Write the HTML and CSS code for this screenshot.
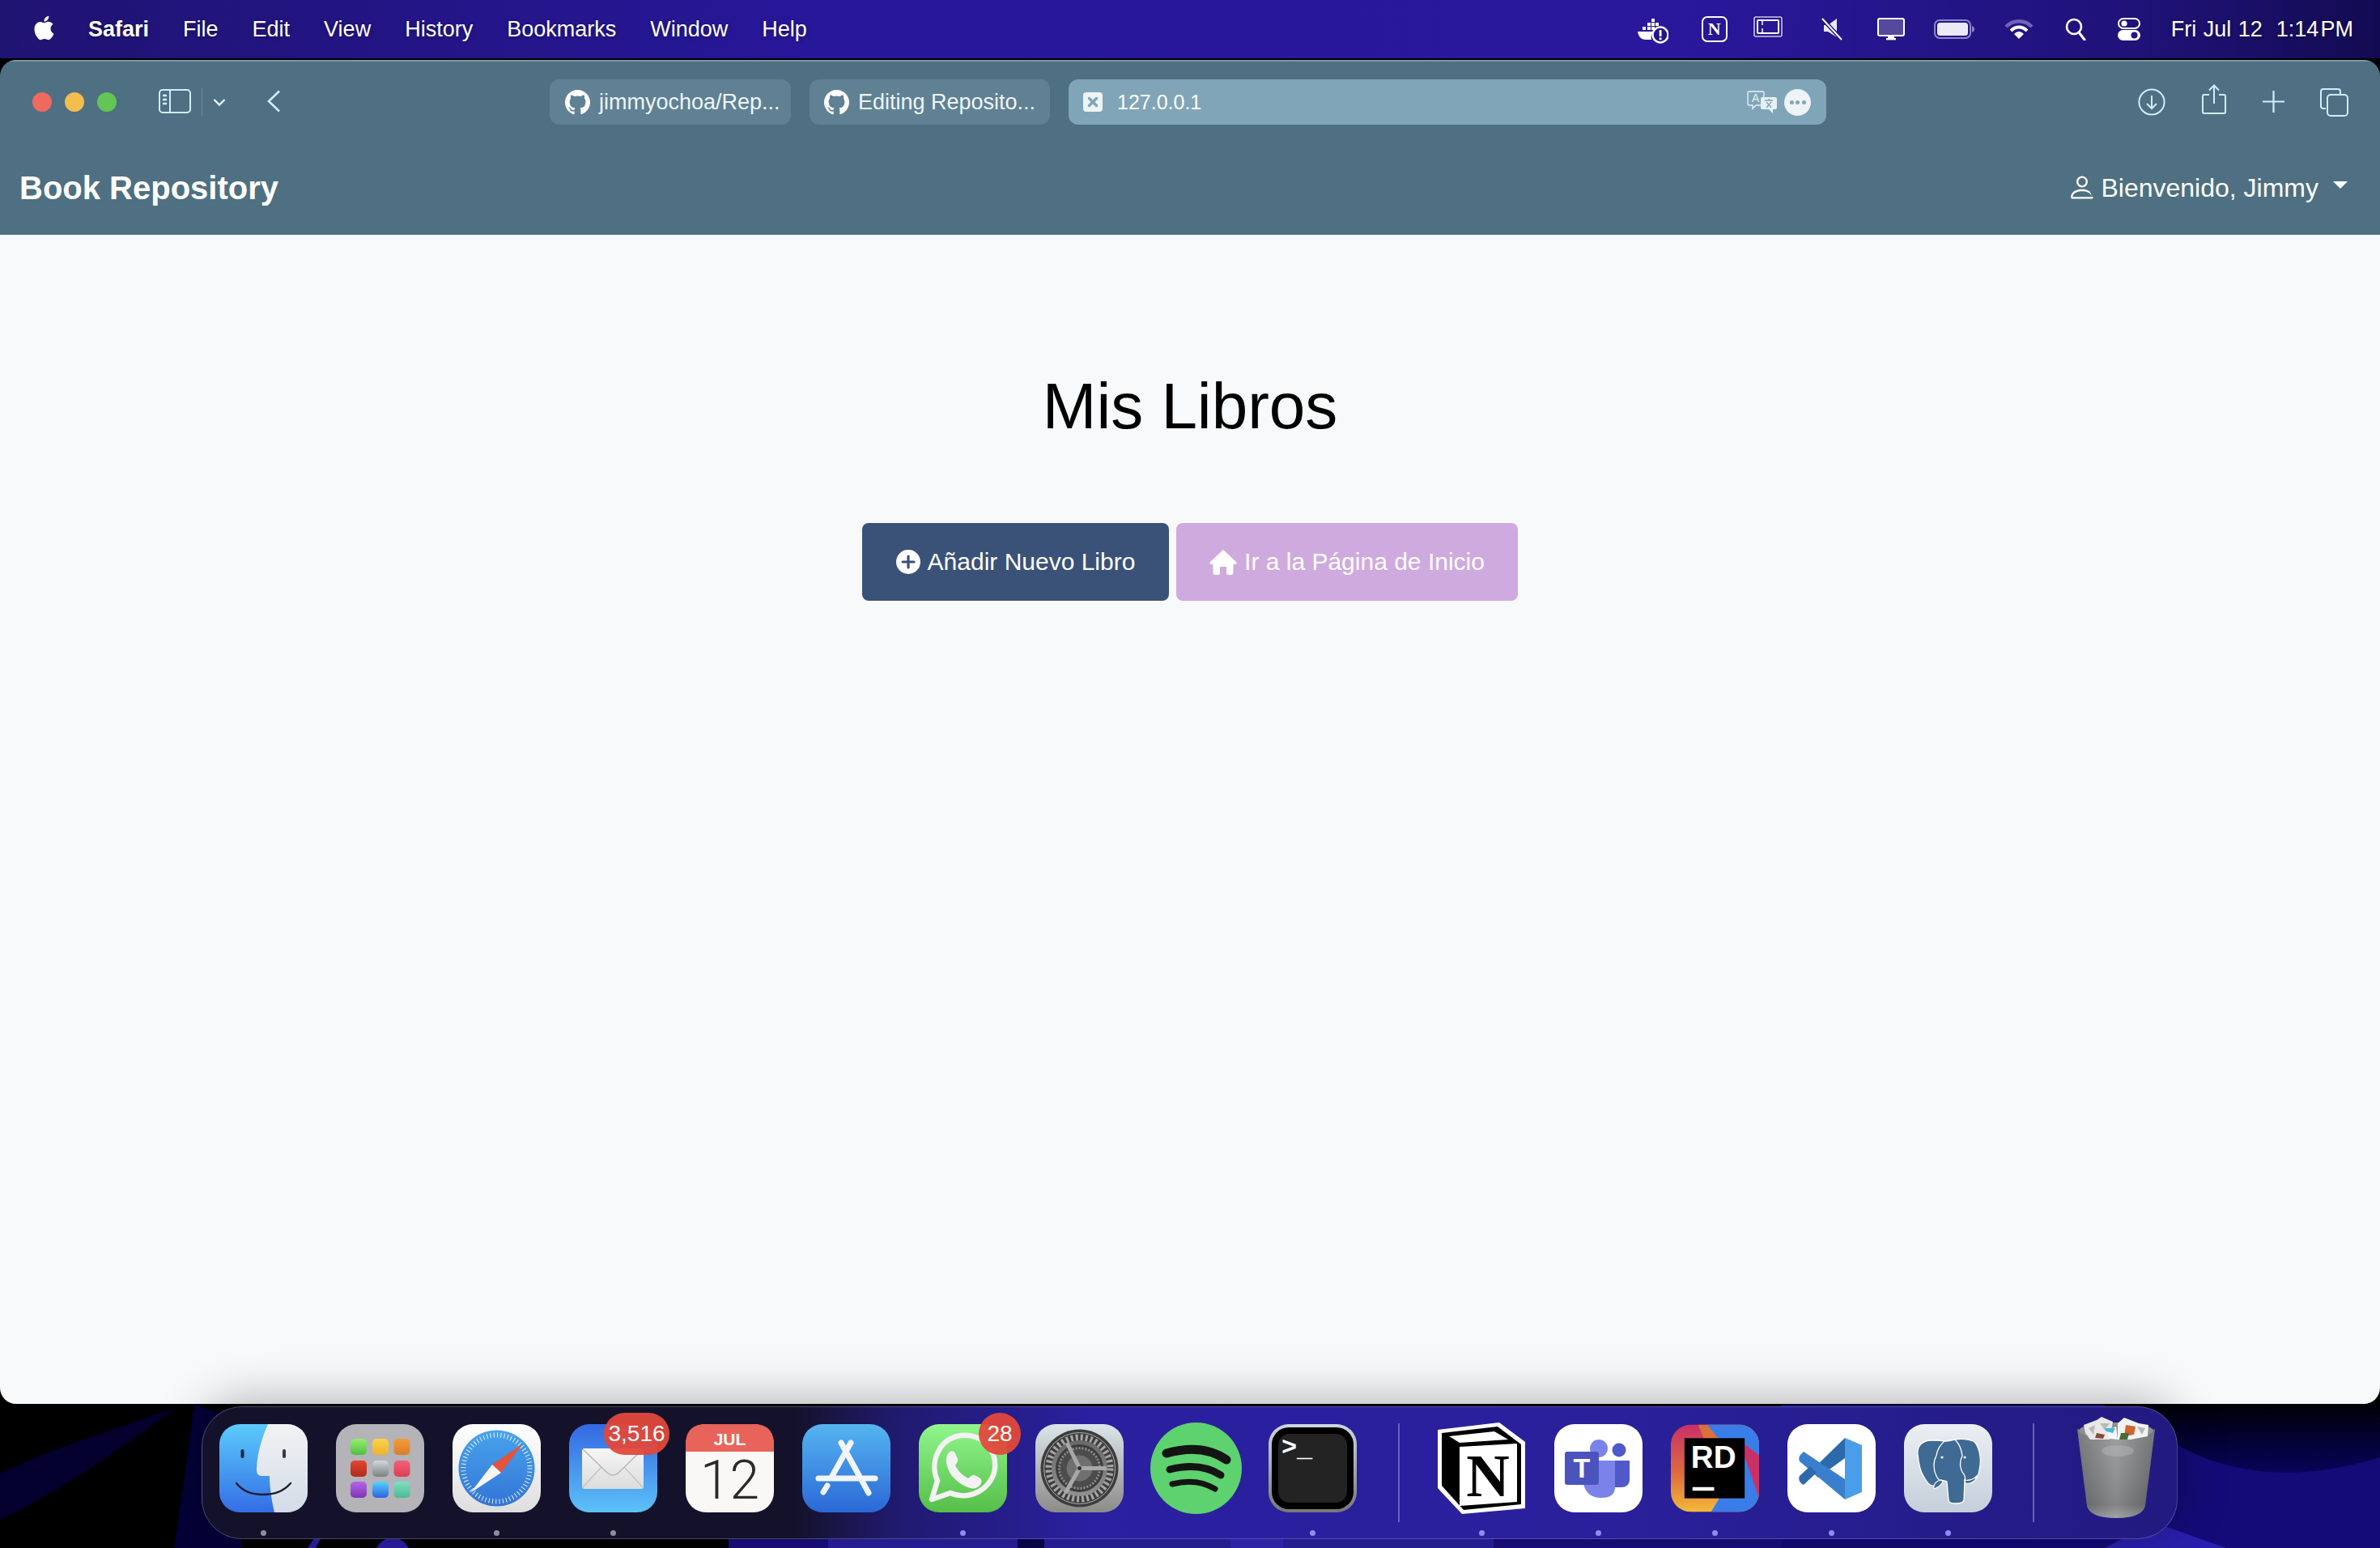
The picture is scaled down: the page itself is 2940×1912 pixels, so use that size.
FILE: index.html
```html
<!DOCTYPE html>
<html lang="es">
<head>
<meta charset="utf-8">
<title>Mis Libros</title>
<link rel="stylesheet" href="styles.css">
</head>
<body class="desktop">

<!-- wallpaper, free canvas behind everything -->
<svg class="wallpaper" viewBox="0 0 2940 1912" preserveAspectRatio="none">
	<defs>
		<linearGradient id="wall-wave" x1="0" y1="0" x2="0" y2="1">
			<stop offset="0" stop-color="#000008"/>
			<stop offset="1" stop-color="#08045a"/>
		</linearGradient>
	</defs>
	<rect width="2940" height="1912" fill="#000"/>
	<path d="M0 1820 C60 1790 130 1770 216 1739 C150 1790 60 1850 0 1877Z" fill="#03002e"/>
	<path d="M215 1912 C225 1850 235 1770 240 1735 L270 1745 L300 1912Z" fill="#040038"/>
	<path d="M380 1912 L395 1890 L402 1890 L390 1912Z M465 1912 C475 1895 495 1895 505 1912Z" fill="#2b1fa8"/>
	<rect x="900" y="1895" width="1300" height="17" fill="#1a0f80"/>
	<rect x="1023" y="1895" width="234" height="17" fill="#2a20a0"/>
	<rect x="1257" y="1895" width="33" height="17" fill="#0a0650"/>
	<rect x="1290" y="1895" width="230" height="17" fill="#2a20a0"/>
	<rect x="1520" y="1895" width="65" height="17" fill="#3528b8"/>
	<rect x="1585" y="1895" width="260" height="17" fill="#2a20a0"/>
	<rect x="2200" y="1735" width="740" height="177" fill="#140b78"/>
	<path d="M2600 1735 H2940 V1800 C2860 1825 2770 1830 2690 1785 L2600 1760Z" fill="url(#wall-wave)"/>
	<path d="M2660 1880 L2750 1912 H2600Z" fill="#2a1fae"/>
</svg>

<header class="menubar">
	<div class="menu-list">
		<svg class="apple" viewBox="3 1.5 18 21"><path d="M18.71 19.5c-.83 1.24-1.71 2.45-3.05 2.47-1.34.03-1.77-.79-3.29-.79-1.53 0-2 .77-3.27.82-1.31.05-2.3-1.32-3.14-2.53C4.25 17 2.94 12.45 4.7 9.39c.87-1.52 2.43-2.48 4.12-2.51 1.28-.02 2.5.87 3.29.87.78 0 2.26-1.07 3.81-.91.65.03 2.47.26 3.64 1.98-.09.06-2.17 1.28-2.15 3.81.03 3.02 2.65 4.03 2.68 4.04-.03.07-.42 1.44-1.38 2.83M13 3.5c.73-.83 1.94-1.46 2.94-1.5.13 1.17-.34 2.35-1.04 3.19-.69.85-1.83 1.51-2.95 1.42-.15-1.15.41-2.35 1.05-3.11z"/></svg>
		<span class="menu-app">Safari</span>
		<span>File</span>
		<span>Edit</span>
		<span>View</span>
		<span>History</span>
		<span>Bookmarks</span>
		<span>Window</span>
		<span>Help</span>
	</div>
	<div class="status-list">
		<svg class="st-docker" viewBox="0 0 38 32" fill="#fff">
			<rect x="17" y="1" width="4" height="4"/><rect x="12" y="6" width="4" height="4"/><rect x="17" y="6" width="4" height="4"/><rect x="22" y="6" width="4" height="4"/><rect x="6" y="11" width="4" height="4"/><rect x="12" y="11" width="4" height="4"/><rect x="17" y="11" width="4" height="4"/>
			<path d="M0 17 H20 C17 19 16 23 17 27 H10 C4 27 1 23 0 17Z"/>
			<circle cx="28" cy="21" r="9.5" fill="#221489" stroke="#fff" stroke-width="2.4"/>
			<rect x="26.7" y="15" width="2.8" height="8"/><rect x="26.7" y="24.5" width="2.8" height="2.8"/>
		</svg>
		<span class="st-notion">N</span>
		<svg class="st-tablet" viewBox="0 0 36 26" fill="none" stroke="#fff" stroke-opacity=".75">
			<rect x="1" y="1" width="34" height="24" rx="2" stroke-width="1.6"/>
			<rect x="5" y="5" width="26" height="16" rx="1" stroke-width="2" stroke-opacity="1"/>
			<path d="M11 5 V11 M11 15 V21" stroke-width="2"/>
		</svg>
		<svg class="st-mute" viewBox="0 0 26 28">
			<path d="M3 9 H8 L19 1 V24 L8 17 H3Z" fill="#fff" fill-opacity=".9"/>
			<path d="M1 1 L25 27" stroke="#221489" stroke-width="5"/>
			<path d="M1 1 L25 27" stroke="#fff" stroke-width="2"/>
		</svg>
		<svg class="st-display" viewBox="0 0 34 28">
			<rect x="1" y="1" width="32" height="21" rx="2" fill="#55499f" stroke="#fff" stroke-width="2"/>
			<rect x="13" y="22" width="8" height="3" fill="#fff"/><rect x="11" y="25" width="12" height="2.4" fill="#fff"/>
		</svg>
		<svg class="st-battery" viewBox="0 0 50 24">
			<rect x="1" y="1" width="44" height="22" rx="6" fill="none" stroke="#8d85c8" stroke-width="2"/>
			<rect x="4" y="4" width="38" height="16" rx="3.5" fill="#ebe9f5"/>
			<path d="M47 8 C49 9 50 10 50 12 C50 14 49 15 47 16Z" fill="#8d85c8"/>
		</svg>
		<svg class="st-wifi" viewBox="0 0 36 26" fill="none">
			<path d="M2 10 C11 1 25 1 34 10" stroke="#6d63b8" stroke-width="4.4"/>
			<path d="M8 15 C14 9 22 9 28 15" stroke="#fff" stroke-width="4"/>
			<path d="M18 25 L12 19 C16 15 20 15 24 19Z" fill="#fff"/>
		</svg>
		<svg class="st-search" viewBox="0 0 26 28" fill="none" stroke="#fff" stroke-width="2.6">
			<circle cx="11" cy="11" r="9"/><path d="M17 18 L24 27" stroke-linecap="round" stroke-width="3"/>
		</svg>
		<svg class="st-control" viewBox="0 0 28 28">
			<rect x="1" y="1" width="26" height="12" rx="6" fill="none" stroke="#fff" stroke-width="2"/>
			<circle cx="8" cy="7" r="3.6" fill="#fff"/>
			<rect x="0" y="15" width="28" height="13" rx="6.5" fill="#fff"/>
			<circle cx="20.5" cy="21.5" r="4" fill="#221489"/>
		</svg>
		<span class="clock">Fri Jul 12&nbsp;&nbsp;1:14&#8202;PM</span>
	</div>
</header>

<main class="window">
	<div class="chrome">
		<div class="toolbar">
			<div class="toolbar-left">
				<div class="lights">
					<span class="light light-red"></span>
					<span class="light light-yellow"></span>
					<span class="light light-green"></span>
				</div>
				<svg class="tb-sidebar" viewBox="0 0 40 30" fill="none" stroke="#cdeefc" stroke-width="2">
					<rect x="1" y="1" width="38" height="28" rx="4"/>
					<path d="M14 1 V29"/>
					<path d="M5 8 H10 M5 13 H10 M5 18 H10" stroke-width="2.4"/>
				</svg>
				<span class="tb-sep"></span>
				<svg class="tb-chevron" viewBox="0 0 16 9" fill="none" stroke="#e8f6fc" stroke-width="2.4"><path d="M1.5 1 L8 7.5 L14.5 1"/></svg>
				<svg class="tb-back" viewBox="0 0 18 28" fill="none" stroke="#cdeefc" stroke-width="2.6"><path d="M16 1.5 L3 14 L16 26.5"/></svg>
			</div>
			<div class="tabs">
				<div class="tab tab-one">
					<svg class="gh" viewBox="0 0 16 16"><path d="M8 0C3.58 0 0 3.58 0 8c0 3.54 2.29 6.53 5.47 7.59.4.07.55-.17.55-.38 0-.19-.01-.82-.01-1.49-2.01.37-2.53-.49-2.69-.94-.09-.23-.48-.94-.82-1.13-.28-.15-.68-.52-.01-.53.63-.01 1.08.58 1.23.82.72 1.21 1.87.87 2.33.66.07-.52.28-.87.51-1.07-1.78-.2-3.64-.89-3.64-3.95 0-.87.31-1.59.82-2.15-.08-.2-.36-1.02.08-2.12 0 0 .67-.21 2.2.82.64-.18 1.32-.27 2-.27.68 0 1.36.09 2 .27 1.53-1.04 2.2-.82 2.2-.82.44 1.1.16 1.92.08 2.12.51.56.82 1.27.82 2.15 0 3.07-1.87 3.75-3.65 3.95.29.25.54.73.54 1.48 0 1.07-.01 1.93-.01 2.2 0 .21.15.46.55.38A8.013 8.013 0 0016 8c0-4.42-3.58-8-8-8z"/></svg>
					<span>jimmyochoa/Rep...</span>
				</div>
				<div class="tab tab-two">
					<svg class="gh" viewBox="0 0 16 16"><path d="M8 0C3.58 0 0 3.58 0 8c0 3.54 2.29 6.53 5.47 7.59.4.07.55-.17.55-.38 0-.19-.01-.82-.01-1.49-2.01.37-2.53-.49-2.69-.94-.09-.23-.48-.94-.82-1.13-.28-.15-.68-.52-.01-.53.63-.01 1.08.58 1.23.82.72 1.21 1.87.87 2.33.66.07-.52.28-.87.51-1.07-1.78-.2-3.64-.89-3.64-3.95 0-.87.31-1.59.82-2.15-.08-.2-.36-1.02.08-2.12 0 0 .67-.21 2.2.82.64-.18 1.32-.27 2-.27.68 0 1.36.09 2 .27 1.53-1.04 2.2-.82 2.2-.82.44 1.1.16 1.92.08 2.12.51.56.82 1.27.82 2.15 0 3.07-1.87 3.75-3.65 3.95.29.25.54.73.54 1.48 0 1.07-.01 1.93-.01 2.2 0 .21.15.46.55.38A8.013 8.013 0 0016 8c0-4.42-3.58-8-8-8z"/></svg>
					<span>Editing Reposito...</span>
				</div>
				<div class="tab tab-active">
					<svg class="favicon" viewBox="0 0 24 24"><rect width="24" height="24" rx="4" fill="#eef3f6"/><path d="M7.5 7.5 L16.5 16.5 M16.5 7.5 L7.5 16.5" stroke="#81a5b8" stroke-width="3.4" stroke-linecap="round"/></svg>
					<span class="tab-url">127.0.0.1</span>
					<svg class="translate" viewBox="0 0 37 28">
						<path d="M3 1 H19 Q21 1 21 3 V16 Q21 18 19 18 H11 L7 22 V18 H3 Q1 18 1 16 V3 Q1 1 3 1Z" fill="none" stroke="#e6f0f5" stroke-width="1.4"/>
						<text x="6" y="14" class="translate-a">A</text>
						<path d="M19 8 H35 Q37 8 37 10 V21 Q37 23 35 23 H32 V28 L27 23 H19 Q17 23 17 21 V10 Q17 8 19 8Z" fill="#e6f0f5"/>
						<path d="M22 12 H32 M27 10 V12 M24 21 L30 14 M30 21 L24 14" stroke="#81a5b8" stroke-width="1.4" fill="none"/>
					</svg>
					<span class="reader"><i></i><i></i><i></i></span>
				</div>
			</div>
			<div class="toolbar-right">
				<svg class="tb-download" viewBox="0 0 34 34" fill="none" stroke="#cdeefc" stroke-width="2"><circle cx="17" cy="17" r="15.6"/><path d="M17 9 V25 M11 19 L17 25 L23 19"/></svg>
				<svg class="tb-share" viewBox="0 0 30 37" fill="none" stroke="#cdeefc" stroke-width="2"><path d="M9 13 H3 Q1 13 1 15 V34 Q1 36 3 36 H27 Q29 36 29 34 V15 Q29 13 27 13 H21"/><path d="M15 24 V1.5 M9 7.5 L15 1.5 L21 7.5"/></svg>
				<svg class="tb-plus" viewBox="0 0 27 27" fill="none" stroke="#cdeefc" stroke-width="2.2"><path d="M13.5 0 V27 M0 13.5 H27"/></svg>
				<svg class="tb-tabs" viewBox="0 0 35 35" fill="none" stroke="#cdeefc" stroke-width="2"><path d="M7 25 H4 Q1 25 1 22 V4 Q1 1 4 1 H22 Q25 1 25 4 V8"/><rect x="9" y="8" width="25" height="26" rx="4"/></svg>
			</div>
		</div>
		<nav class="navbar">
			<a class="brand">Book Repository</a>
			<div class="user">
				<svg class="user-icon" viewBox="2 2 12 12.4"><path d="M8 8a3 3 0 1 0 0-6 3 3 0 0 0 0 6Zm2-3a2 2 0 1 1-4 0 2 2 0 0 1 4 0Zm4 8c0 1-1 1-1 1H3s-1 0-1-1 1-4 6-4 5 3 5 4Zm-1-.004c-.001-.246-.154-.986-.832-1.664C11.516 10.68 10.289 10 8 10c-2.29 0-3.516.68-4.168 1.332-.678.678-.83 1.418-.832 1.664h10Z"/></svg>
				<span>Bienvenido, Jimmy</span>
				<span class="caret"></span>
			</div>
		</nav>
	</div>
	<div class="page">
		<h1>Mis Libros</h1>
		<div class="actions">
			<a class="btn btn-add">
				<svg class="btn-icon" viewBox="0 0 30 30"><circle cx="15" cy="15" r="15" fill="#fff"/><path d="M15 8 V22 M8 15 H22" stroke="#3a5278" stroke-width="3.2" stroke-linecap="round"/></svg>
				Añadir Nuevo Libro
			</a>
			<a class="btn btn-home">
				<svg class="btn-icon-home" viewBox="0 0 34 31"><path d="M17 0 L33 15 Q35 18 31 18 H29.500 V28 Q29.500 31 27 31 H23 Q21 31 21 29 V21 H13 V29 Q13 31 11 31 H7 Q4.500 31 4.500 28 V18 H3 Q-1 18 1 15Z" fill="#fff"/></svg>
				Ir a la Página de Inicio
			</a>
		</div>
	</div>
</main>

<footer class="dock">
	<div class="dock-item has-dot">
		<svg viewBox="0 0 109 109">
			<defs>
				<clipPath id="sq"><rect width="109" height="109" rx="25"/></clipPath>
				<linearGradient id="fi-l" x1="0" y1="0" x2="0" y2="1"><stop offset="0" stop-color="#5bcbfb"/><stop offset="1" stop-color="#346de6"/></linearGradient>
				<linearGradient id="fi-r" x1="0" y1="0" x2="0" y2="1"><stop offset="0" stop-color="#f2f2f3"/><stop offset="1" stop-color="#d3dce8"/></linearGradient>
			</defs>
			<g clip-path="url(#sq)">
				<rect width="109" height="109" fill="url(#fi-l)"/>
				<path d="M60 0 C52 18 46 38 46 57 Q46 64 52 64 H62 C62 80 65 96 68 109 H109 V0Z" fill="url(#fi-r)"/>
			</g>
			<rect x="26.500" y="31" width="4" height="11" rx="2" fill="#1f2a3d"/>
			<rect x="78" y="31" width="4" height="11" rx="2" fill="#333a45"/>
			<path d="M21 73 Q32 87 54 87 Q76 87 88 73" fill="none" stroke="#1c1f2a" stroke-width="2.4" stroke-linecap="round"/>
		</svg>
	</div>
	<div class="dock-item">
		<svg viewBox="0 0 109 109">
			<defs>
				<linearGradient id="lp-g" x1="0" y1="0" x2="0" y2="1"><stop offset="0" stop-color="#96ee70"/><stop offset="1" stop-color="#4fbf42"/></linearGradient>
				<linearGradient id="lp-y" x1="0" y1="0" x2="0" y2="1"><stop offset="0" stop-color="#fbd24a"/><stop offset="1" stop-color="#efb22f"/></linearGradient>
				<linearGradient id="lp-o" x1="0" y1="0" x2="0" y2="1"><stop offset="0" stop-color="#f09c3a"/><stop offset="1" stop-color="#dd7d2a"/></linearGradient>
				<linearGradient id="lp-r" x1="0" y1="0" x2="0" y2="1"><stop offset="0" stop-color="#e2462f"/><stop offset="1" stop-color="#b42a1c"/></linearGradient>
				<linearGradient id="lp-s" x1="0" y1="0" x2="0" y2="1"><stop offset="0" stop-color="#d0dade"/><stop offset="1" stop-color="#7c8083"/></linearGradient>
				<linearGradient id="lp-p" x1="0" y1="0" x2="0" y2="1"><stop offset="0" stop-color="#f2607a"/><stop offset="1" stop-color="#dd3f58"/></linearGradient>
				<linearGradient id="lp-v" x1="0" y1="0" x2="0" y2="1"><stop offset="0" stop-color="#b764e8"/><stop offset="1" stop-color="#7e35b8"/></linearGradient>
				<linearGradient id="lp-b" x1="0" y1="0" x2="0" y2="1"><stop offset="0" stop-color="#56d2fb"/><stop offset="1" stop-color="#2b63e2"/></linearGradient>
				<linearGradient id="lp-t" x1="0" y1="0" x2="0" y2="1"><stop offset="0" stop-color="#7fe0c0"/><stop offset="1" stop-color="#4cb892"/></linearGradient>
			</defs>
			<rect width="109" height="109" rx="25" fill="#b3b3b8"/>
			<rect x="18" y="18" width="20" height="20" rx="5" fill="url(#lp-g)"/>
			<rect x="45" y="18" width="20" height="20" rx="5" fill="url(#lp-y)"/>
			<rect x="71.500" y="18" width="20" height="20" rx="5" fill="url(#lp-o)"/>
			<rect x="18" y="45" width="20" height="20" rx="5" fill="url(#lp-r)"/>
			<rect x="45" y="45" width="20" height="20" rx="5" fill="url(#lp-s)"/>
			<rect x="71.500" y="45" width="20" height="20" rx="5" fill="url(#lp-p)"/>
			<rect x="18" y="71" width="20" height="20" rx="5" fill="url(#lp-v)"/>
			<rect x="45" y="71" width="20" height="20" rx="5" fill="url(#lp-b)"/>
			<rect x="71.500" y="71" width="20" height="20" rx="5" fill="url(#lp-t)"/>
		</svg>
	</div>
	<div class="dock-item has-dot">
		<svg viewBox="0 0 109 109">
			<defs>
				<linearGradient id="sa-w" x1="0" y1="0" x2="0" y2="1"><stop offset="0" stop-color="#fff"/><stop offset="1" stop-color="#dedede"/></linearGradient>
				<linearGradient id="sa-b" x1="0" y1="0" x2="0" y2="1"><stop offset="0" stop-color="#48a4ec"/><stop offset="1" stop-color="#3374d6"/></linearGradient>
			</defs>
			<rect width="109" height="109" rx="25" fill="url(#sa-w)"/>
			<circle cx="54.500" cy="54.500" r="47" fill="url(#sa-b)"/>
			<circle cx="54.500" cy="54.500" r="41" fill="none" stroke="#e8f3fc" stroke-width="6" stroke-dasharray="1 3.300"/>
			<path d="M87 24 L49 50 L60 60Z" fill="#e4543c"/>
			<path d="M22 85 L49 50 L60 60Z" fill="#f5f5f5"/>
		</svg>
	</div>
	<div class="dock-item has-dot">
		<svg viewBox="0 0 109 109">
			<defs>
				<linearGradient id="ma-b" x1="0" y1="0" x2="0" y2="1"><stop offset="0" stop-color="#3468e2"/><stop offset="1" stop-color="#5cc2f8"/></linearGradient>
				<linearGradient id="ma-e" x1="0" y1="0" x2="0" y2="1"><stop offset="0" stop-color="#f6f6f6"/><stop offset="1" stop-color="#dcdcdc"/></linearGradient>
			</defs>
			<rect width="109" height="109" rx="25" fill="url(#ma-b)"/>
			<rect x="16" y="30" width="76" height="50" rx="3" fill="url(#ma-e)"/>
			<path d="M17 31 L47 60 Q54 66 61 60 L91 31" fill="none" stroke="#b8b8b8" stroke-width="1.6"/>
			<path d="M17 78 L40 53 M91 78 L68 53" fill="none" stroke="#c4c4c4" stroke-width="1.4"/>
		</svg>
		<span class="badge badge-mail">3,516</span>
	</div>
	<div class="dock-item">
		<svg viewBox="0 0 109 109">
			<rect width="109" height="109" rx="25" fill="#f9f8f6"/>
			<path d="M0 34 V25 Q0 0 25 0 H84 Q109 0 109 25 V34Z" fill="#e8635a"/>
			<text x="54.500" y="26" text-anchor="middle" class="cal-month">JUL</text>
			<text x="54.500" y="92" text-anchor="middle" class="cal-day">12</text>
		</svg>
	</div>
	<div class="dock-item">
		<svg viewBox="0 0 109 109">
			<defs><linearGradient id="as-b" x1="0" y1="0" x2="0" y2="1"><stop offset="0" stop-color="#55b5f0"/><stop offset="1" stop-color="#2a68d6"/></linearGradient></defs>
			<rect width="109" height="109" rx="25" fill="url(#as-b)"/>
			<g fill="none" stroke="#f2f6fc" stroke-width="7" stroke-linecap="round">
				<path d="M60 23 L37 64"/>
				<path d="M31 76 L26 84"/>
				<path d="M48 23 L82 85"/>
				<path d="M20 67 H90"/>
			</g>
		</svg>
	</div>
	<div class="dock-item has-dot">
		<svg viewBox="0 0 109 109">
			<defs><linearGradient id="wa-g" x1="0" y1="0" x2="0" y2="1"><stop offset="0" stop-color="#90f68c"/><stop offset="1" stop-color="#56be49"/></linearGradient></defs>
			<rect width="109" height="109" rx="25" fill="url(#wa-g)"/>
			<path d="M16 93 L23 70 C13 48 24 18 52 14 C78 11 96 32 94 54 C92 78 64 96 39 85Z" fill="none" stroke="#f3f3f3" stroke-width="6.500" stroke-linejoin="round"/>
			<path d="M37 35 C40 32 44 33 45 36 L48 43 C49 46 46 49 45 51 C49 59 54 63 61 67 C64 65 66 62 69 63 L76 67 C78 69 78 72 76 75 C72 80 66 81 58 77 C47 72 38 63 35 52 C33 45 34 39 37 35Z" fill="#f3f3f3"/>
		</svg>
		<span class="badge badge-wa">28</span>
	</div>
	<div class="dock-item">
		<svg viewBox="0 0 109 109">
			<defs>
				<linearGradient id="se-b" x1="0" y1="0" x2="0" y2="1"><stop offset="0" stop-color="#dbe5ea"/><stop offset="1" stop-color="#8c8b88"/></linearGradient>
				<linearGradient id="se-r" x1="0" y1="0" x2="0" y2="1"><stop offset="0" stop-color="#6a6a6a"/><stop offset="1" stop-color="#8f8f8f"/></linearGradient>
			</defs>
			<rect width="109" height="109" rx="25" fill="url(#se-b)"/>
			<circle cx="54.500" cy="54.500" r="48" fill="#3d3d3d"/>
			<circle cx="54.500" cy="54.500" r="44" fill="none" stroke="#b0b0b0" stroke-width="1"/>
			<circle cx="54.500" cy="54.500" r="38" fill="none" stroke="#a5a5a5" stroke-width="8" stroke-dasharray="3 3"/>
			<circle cx="54.500" cy="54.500" r="32" fill="none" stroke="url(#se-r)" stroke-width="5"/>
			<circle cx="54.500" cy="54.500" r="26" fill="#4c4c4c"/>
			<circle cx="54.500" cy="54.500" r="25" fill="none" stroke="#8a8a8a" stroke-width="3" stroke-dasharray="2 2"/>
			<circle cx="54.500" cy="54.500" r="16" fill="#707070"/>
			<g stroke="#a8a8a8" stroke-width="5"><path d="M54.500 54.500 L39 23"/><path d="M54.500 54.500 L88 54.500"/><path d="M54.500 54.500 L37 85"/></g>
			<circle cx="54.500" cy="54.500" r="2.500" fill="#333"/>
		</svg>
	</div>
	<div class="dock-item dock-spotify">
		<svg viewBox="0 0 113 113">
			<circle cx="56.500" cy="56.500" r="56.500" fill="#5dd26e"/>
			<g fill="none" stroke="#141414" stroke-linecap="round">
				<path d="M20 38 C48 30 74 32 94 46" stroke-width="11"/>
				<path d="M24 58 C48 52 70 54 87 65" stroke-width="9"/>
				<path d="M27 76 C46 71 65 73 80 82" stroke-width="7"/>
			</g>
		</svg>
	</div>
	<div class="dock-item has-dot">
		<svg viewBox="0 0 109 109">
			<defs><linearGradient id="te-b" x1="0" y1="0" x2="0" y2="1"><stop offset="0" stop-color="#ccd8e0"/><stop offset="1" stop-color="#777"/></linearGradient></defs>
			<rect width="109" height="109" rx="25" fill="url(#te-b)"/>
			<rect x="4" y="4" width="101" height="101" rx="21" fill="#000"/>
			<rect x="12" y="12" width="85" height="85" rx="14" fill="#232323"/>
			<text x="16" y="38" class="term-text">&gt;</text>
			<text x="35" y="40" class="term-text">_</text>
		</svg>
	</div>
	<span class="dock-sep dock-sep-one"></span>
	<div class="dock-item dock-notion has-dot">
		<svg viewBox="0 0 109 113">
			<path d="M0 9 L76 0 L108 24 V106 L30 113 L0 81Z" fill="#fff"/>
			<path d="M5 13 L74 5 L103 27 V101 L32 108 L5 78Z" fill="#000"/>
			<path d="M27 30 L98 26 V98 L27 103Z" fill="#fff"/>
			<path d="M14 17 L70 11 L87 21 L27 25Z" fill="#fff"/>
			<text x="62" y="91" text-anchor="middle" class="notion-n">N</text>
		</svg>
	</div>
	<div class="dock-item has-dot">
		<svg viewBox="0 0 109 109">
			<rect width="109" height="109" rx="25" fill="#fff"/>
			<circle cx="80" cy="32" r="8.500" fill="#5059c9"/>
			<path d="M72 45 H93 V68 Q93 78 82 78 H72Z" fill="#5059c9"/>
			<circle cx="55" cy="30" r="11" fill="#7b83eb"/>
			<path d="M36 45 H75 V78 Q75 91 58 91 Q40 91 36 74Z" fill="#7b83eb"/>
			<rect x="13" y="34" width="42" height="41" rx="3" fill="#4b53bc"/>
			<text x="34" y="66" text-anchor="middle" class="teams-t">T</text>
		</svg>
	</div>
	<div class="dock-item has-dot">
		<svg viewBox="0 0 110 109">
			<defs>
				<clipPath id="rd-c"><rect width="110" height="109" rx="25"/></clipPath>
				<linearGradient id="rd-o" x1="0" y1="0" x2="0" y2="1"><stop offset="0" stop-color="#c93068"/><stop offset=".55" stop-color="#dd6a3f"/><stop offset="1" stop-color="#f4b93a"/></linearGradient>
			</defs>
			<g clip-path="url(#rd-c)">
				<rect width="110" height="109" fill="url(#rd-o)"/>
				<path d="M34 0 H110 V38 L70 50 L46 30Z" fill="#d9713e"/>
				<path d="M45 0 H110 V40 L70 30Z" fill="#3a7de8"/>
				<path d="M88 22 L110 38 V90 L90 70Z" fill="#c93068"/>
				<path d="M50 109 L92 40 L110 92 V109Z" fill="#3a7de8"/>
			</g>
			<rect x="17" y="17" width="75" height="75" fill="#000"/>
			<text x="25" y="54" class="rd-text">RD</text>
			<rect x="27" y="78" width="27" height="4.500" fill="#fff"/>
		</svg>
	</div>
	<div class="dock-item has-dot">
		<svg viewBox="0 0 109 109">
			<rect width="109" height="109" rx="25" fill="#fff"/>
			<path d="M71 17 L92 26 V84 L71 93Z" fill="#4a9de8"/>
			<path d="M71 17 V42 L38 66 L29 58Z" fill="#2c6aab"/>
			<path d="M20 34 L71 68 V93 L15 46 Q13 42 16 38Z" fill="#3a7fcd"/>
			<path d="M15 64 L28 52 L36 60 L21 74 Q19 76 16 72 Q13 68 15 64Z" fill="#2c6aab"/>
		</svg>
	</div>
	<div class="dock-item has-dot">
		<svg viewBox="0 0 109 109">
			<defs><linearGradient id="pg-b" x1="0" y1="0" x2="0" y2="1"><stop offset="0" stop-color="#eceff3"/><stop offset="1" stop-color="#c4cfda"/></linearGradient></defs>
			<rect width="109" height="109" rx="25" fill="url(#pg-b)"/>
			<path d="M34 20 C22 20 16 28 17 37 C18 48 20 58 24 64 C28 72 33 77 37 76 C42 75 45 72 46 69 C49 70 51 70 53 71 L55 94 C56 98 60 98 64 98 C70 98 73 97 74 94 L75 69 C77 70 79 72 82 72 C88 70 92 64 93 57 C95 48 95 42 93 34 C91 26 88 20 82 20 C76 18 69 18 63 19 C58 20 54 21 50 21 C45 20 40 20 34 20Z" fill="#3f6a94" stroke="#fff" stroke-width="1.300"/>
			<path d="M40 39 C36 46 36 56 40 64 C42 68 44 70 46 69 M72 39 C68 47 69 56 74 62 C76 65 76 67 75 69 M50 21 C44 26 41 32 40 39 M63 19 C68 24 71 31 72 39" fill="none" stroke="#fff" stroke-width="1.300"/>
			<circle cx="47" cy="41" r="1.600" fill="#fff"/>
			<circle cx="75" cy="41" r="1.600" fill="#fff"/>
			<path d="M46 69 C40 70 36 74 37 80 C42 78 46 76 48 71Z M75 69 C80 70 86 68 90 64 C88 72 82 74 76 73Z" fill="#3f6a94" stroke="#fff" stroke-width="1.100"/>
		</svg>
	</div>
	<span class="dock-sep dock-sep-two"></span>
	<div class="dock-item dock-trash">
		<svg viewBox="0 0 97 125">
			<defs>
				<linearGradient id="tr-g" x1="0" y1="0" x2="1" y2="0"><stop offset="0" stop-color="#6e7072"/><stop offset=".5" stop-color="#96989a"/><stop offset="1" stop-color="#6a6c6e"/></linearGradient>
				<linearGradient id="tr-h" x1="0" y1="0" x2="0" y2="1"><stop offset="0" stop-color="#fff" stop-opacity=".08"/><stop offset=".85" stop-color="#000" stop-opacity=".12"/><stop offset="1" stop-color="#fff" stop-opacity=".12"/></linearGradient>
			</defs>
			<path d="M0 15 Q48 34 96 15 L84 110 Q80 125 48 125 Q16 125 12 110Z" fill="url(#tr-g)"/>
			<path d="M0 15 Q48 34 96 15 L84 110 Q80 125 48 125 Q16 125 12 110Z" fill="url(#tr-h)"/>
			<ellipse cx="48" cy="17" rx="46" ry="10" fill="#8d9092"/>
			<path d="M8 10 L24 4 L30 0 L44 6 L40 28 L16 28 L10 20Z" fill="#e8e8e8"/>
			<path d="M50 8 L58 1 L76 8 L88 10 L87 24 L66 28 L50 28Z" fill="#f2f2f2"/>
			<path d="M36 17 L48 12 L50 28 L40 27Z" fill="#f8f8f8"/>
			<path d="M32 14 H47 L44 20 L36 18Z" fill="#4fb6d8"/>
			<path d="M60 10 L72 12 L70 22 L58 24Z" fill="#d0662c"/>
			<path d="M54 20 L64 20 L62 28 L52 28Z" fill="#4a6a3a"/>
			<path d="M24 20 L34 22 L32 27 L22 26Z" fill="#8a4a3a"/>
			<path d="M14 14 L22 10 L20 22Z M74 12 L84 14 L80 22Z M28 8 L40 8 L34 16Z" fill="#b9b9b9"/>
			<ellipse cx="50" cy="42" rx="20" ry="7" fill="#bbb" fill-opacity=".45"/>
		</svg>
	</div>
</footer>

</body>
</html>
```

FILE: styles.css
```css
html, body
{
	margin: 0;
	padding: 0;
}

.desktop
{
	position: relative;
	width: 2940px;
	height: 1912px;
	overflow: hidden;
	background-color: #000;
	font-family: "Liberation Sans", Arial, sans-serif;
}

.wallpaper
{
	position: absolute;
	left: 0;
	top: 0;
	width: 2940px;
	height: 1912px;
}

/* menu bar */

.menubar
{
	position: relative;
	height: 72px;
	display: flex;
	justify-content: space-between;
	align-items: center;
	padding: 0 33px 0 41px;
	background: linear-gradient(90deg, #1f1372 0%, #27179a 35%, #29189c 70%, #1f1278 90%, #130b52 100%);
	color: #fff;
	font-size: 27px;
	text-shadow: 0 1px 4px rgba(0, 0, 0, .35);
}

.menu-list
{
	display: flex;
	align-items: center;
	gap: 42px;
}

.menu-app
{
	font-weight: bold;
	margin-left: -1px;
}

.apple
{
	width: 27px;
	height: 31px;
	fill: #fff;
	margin-top: -4px;
}

.status-list
{
	display: flex;
	align-items: center;
}

.st-docker { width: 38px; height: 32px; margin-right: 41px; margin-top: 4px; }
.st-tablet { width: 36px; height: 26px; margin-right: 48px; margin-top: -6px; }
.st-mute { width: 26px; height: 28px; margin-right: 43px; }
.st-display { width: 34px; height: 28px; margin-right: 36px; }
.st-battery { width: 50px; height: 24px; margin-right: 37px; }
.st-wifi { width: 36px; height: 26px; margin-right: 39px; }
.st-search { width: 26px; height: 28px; margin-right: 39px; }
.st-control { width: 28px; height: 28px; margin-right: 38px; }

.st-notion
{
	width: 28px;
	height: 28px;
	margin-right: 32px;
	border: 2.5px solid #fff;
	border-radius: 7px;
	text-align: center;
	font: bold 22px/28px "Liberation Serif", serif;
}

.clock
{
	word-spacing: 1px;
}

/* browser window */

.window
{
	position: relative;
	height: 1660px;
	margin-top: 2px;
	display: flex;
	flex-direction: column;
	border-radius: 20px;
	overflow: hidden;
}

.chrome
{
	height: 216px;
	box-sizing: border-box;
	background-color: #4e7082;
	border-top: 2px solid #7d97a4;
	flex: none;
}

.toolbar
{
	display: flex;
	align-items: center;
	height: 56px;
	margin-top: 22px;
	padding: 0 39px 0 40px;
}

.toolbar-left
{
	display: flex;
	align-items: center;
	width: 639px;
}

.lights
{
	display: flex;
	gap: 16px;
}

.light
{
	width: 24px;
	height: 24px;
	border-radius: 50%;
}

.light-red { background-color: #ee6a5e; }
.light-yellow { background-color: #f4bd4f; }
.light-green { background-color: #62c554; }

.tb-sidebar { width: 40px; height: 30px; margin-left: 52px; margin-top: -2px; }
.tb-sep { width: 1px; height: 36px; margin-left: 13px; background-color: #6d8b9b; }
.tb-chevron { width: 16px; height: 9px; margin-left: 13px; }
.tb-back { width: 18px; height: 28px; margin-left: 50px; margin-top: -2px; }

.tabs
{
	display: flex;
	gap: 23px;
}

.tab
{
	display: flex;
	align-items: center;
	height: 56px;
	box-sizing: border-box;
	border-radius: 12px;
	background-color: #5f8193;
	color: #eef6fa;
	font-size: 27px;
	white-space: nowrap;
}

.tab-one { width: 298px; padding-left: 19px; gap: 11px; }
.tab-two { width: 297px; padding-left: 18px; gap: 11px; }

.gh
{
	width: 31px;
	height: 31px;
	fill: #fff;
	flex: none;
}

.tab-active
{
	width: 936px;
	padding: 0 19px 0 18px;
	background-color: #81a5b8;
	font-size: 25px;
}

.favicon { width: 24px; height: 24px; }

.tab-url
{
	margin-left: 18px;
	color: #fff;
}

.translate
{
	width: 37px;
	height: 28px;
	margin-left: auto;
}

.translate-a
{
	font-size: 14px;
	fill: #e6f0f5;
}

.reader
{
	display: flex;
	justify-content: center;
	align-items: center;
	gap: 2.5px;
	width: 33px;
	height: 33px;
	margin-left: 9px;
	border-radius: 50%;
	background-color: #eef3f6;
}

.reader i
{
	width: 5px;
	height: 5px;
	border-radius: 50%;
	background-color: #81a5b8;
}

.toolbar-right
{
	display: flex;
	align-items: center;
	margin-left: auto;
}

.tb-download { width: 34px; height: 34px; }
.tb-share { width: 30px; height: 37px; margin-left: 45px; margin-top: -8px; }
.tb-plus { width: 27px; height: 27px; margin-left: 45px; margin-top: -2px; }
.tb-tabs { width: 35px; height: 35px; margin-left: 44px; }

.navbar
{
	display: flex;
	justify-content: space-between;
	align-items: center;
	height: 136px;
	box-sizing: border-box;
	padding: 20px 40px 0 24px;
	color: #fff;
}

.brand
{
	font-size: 40px;
	font-weight: bold;
}

.user
{
	display: flex;
	align-items: center;
	font-size: 32px;
}

.user-icon
{
	width: 28px;
	height: 32px;
	margin-right: 9px;
	fill: #fff;
}

.caret
{
	width: 0;
	height: 0;
	margin-left: 18px;
	margin-top: -8px;
	border-top: 9px solid #fff;
	border-left: 9px solid transparent;
	border-right: 9px solid transparent;
}

/* page content */

.page
{
	flex: 1;
	background-color: #f8f9fa;
	text-align: center;
}

h1
{
	margin: 164px 0 96px;
	font-size: 80px;
	font-weight: normal;
	line-height: 96px;
	color: #000;
}

.actions
{
	display: flex;
	justify-content: center;
	gap: 9px;
}

.btn
{
	display: flex;
	align-items: center;
	justify-content: center;
	height: 96px;
	border-radius: 8px;
	color: #fff;
	font-size: 30px;
}

.btn-add { width: 379px; background-color: #3a5278; }
.btn-home { width: 422px; background-color: #cfaadf; }

.btn-icon { width: 30px; height: 30px; margin-right: 9px; }
.btn-icon-home { width: 34px; height: 31px; margin-right: 9px; }

/* dock */

.dock
{
	position: relative;
	display: flex;
	align-items: flex-start;
	width: 2441px;
	height: 164px;
	box-sizing: border-box;
	margin: 3px 0 0 249px;
	padding: 21px 0 0 21px;
	gap: 35px;
	border: 1px solid rgba(150, 145, 200, .4);
	border-radius: 50px;
	background: linear-gradient(90deg, #14122a 0%, #14122a 30%, #201a6e 35%, #2a20a0 45%, #2a209c 70%, #221a80 100%);
	box-shadow: 0 -6px 60px rgba(0, 0, 0, .3);
}

.dock-item
{
	position: relative;
	width: 109px;
	height: 109px;
	flex: none;
}

.dock-item svg
{
	display: block;
	width: 100%;
	height: 100%;
	overflow: visible;
}

.has-dot::after
{
	content: "";
	position: absolute;
	left: 51px;
	top: 131px;
	width: 7px;
	height: 7px;
	border-radius: 50%;
	background-color: #8f8cf0;
}

.dock-item:first-child::after,
.dock-item:nth-child(3)::after,
.dock-item:nth-child(4)::after
{
	background-color: #8e8c9e;
}

.dock-spotify
{
	width: 113px;
	height: 113px;
	margin: -2px -2px 0 -2px;
}

.dock-notion
{
	height: 113px;
	margin-top: -2px;
}

.dock-notion::after { top: 133px; }

.dock-sep
{
	width: 2px;
	height: 122px;
	flex: none;
	margin-top: -1px;
	background-color: rgba(170, 165, 230, .5);
}

.dock-sep-one { margin-left: 16px; margin-right: 12px; }
.dock-sep-two { margin-left: 15px; margin-right: 18px; }

.dock-trash
{
	width: 97px;
	height: 125px;
	margin-top: -9px;
}

.badge
{
	position: absolute;
	top: -14px;
	height: 52px;
	border-radius: 26px;
	background-color: rgba(226, 72, 58, .95);
	color: #fff;
	font-size: 28px;
	line-height: 52px;
	text-align: center;
}

.badge-mail { left: 43px; width: 81px; }
.badge-wa { left: 74px; width: 52px; }

.cal-month { font-size: 21px; font-weight: bold; fill: #fff; }
.cal-day { font: 300 66px Roboto, "Liberation Sans", sans-serif; fill: #2b2b2b; }
.term-text { font: bold 32px "Liberation Mono", monospace; fill: #fff; }
.notion-n { font: bold 74px "Liberation Serif", serif; fill: #000; }
.teams-t { font-size: 34px; font-weight: bold; fill: #fff; }
.rd-text { font-size: 39px; font-weight: bold; fill: #fff; }
```
